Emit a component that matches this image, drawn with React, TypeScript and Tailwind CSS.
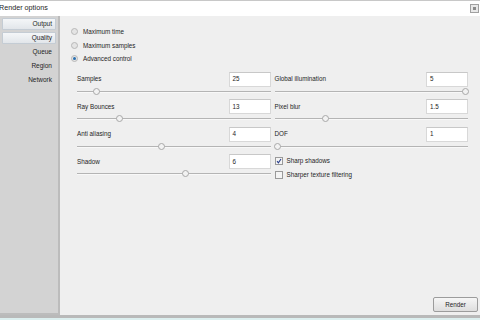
const font = { fontFamily: '"Liberation Sans", Arial, sans-serif' };

type Field = { label: string; value: string; pos: number };

const leftFields: Field[] = [
  { label: "Samples", value: "25", pos: 0.1 },
  { label: "Ray Bounces", value: "13", pos: 0.215 },
  { label: "Anti aliasing", value: "4", pos: 0.435 },
  { label: "Shadow", value: "6", pos: 0.56 },
];

const rightFields: Field[] = [
  { label: "Global illumination", value: "5", pos: 0.985 },
  { label: "Pixel blur", value: "1.5", pos: 0.26 },
  { label: "DOF", value: "1", pos: 0.015 },
];

const Slider = ({ pos }: { pos: number }) => (
  <div className="relative h-[8px] mt-[1px]">
    <div className="absolute left-0 right-0 top-[3px] h-[1px] bg-[#b4b4b4]" />
    <div className="absolute left-0 right-0 top-[4px] h-[1px] bg-[#f8f8f8]" />
    <div
      className="absolute top-0 w-[7px] h-[7px] -ml-[3px] rounded-full border border-[#a8a8a8] bg-[#f2f2f2]"
      style={{ left: `${pos * 100}%` }}
    />
  </div>
);

const FieldRow = ({ f }: { f: Field }) => (
  <div className="flex flex-col h-[27.5px]">
    <div className="flex items-center justify-between h-[15px]">
      <span className="text-[6.3px] text-[#1e1e1e]">{f.label}</span>
      <div className="w-[42px] h-[15px] bg-white border border-[#d8d8d8] border-t-[#c8c8c8] flex items-center px-[3px] text-[6.3px] text-[#1e1e1e]">
        {f.value}
      </div>
    </div>
    <Slider pos={f.pos} />
  </div>
);

const Radio = ({ label, checked }: { label: string; checked?: boolean }) => (
  <div className="flex items-center gap-[5px] h-[13.5px]">
    <div className="w-[7px] h-[7px] rounded-full border border-[#b8b8b8] bg-[#e4e4e4] flex items-center justify-center">
      {checked && <div className="w-[3px] h-[3px] rounded-full bg-[#2a6fb0]" />}
    </div>
    <span className="text-[6.3px] text-[#1e1e1e]">{label}</span>
  </div>
);

const Check = ({ label, checked }: { label: string; checked?: boolean }) => (
  <div className="flex items-center gap-[4px] h-[14px]">
    <div className="w-[8px] h-[8px] border border-[#9a9a9a] bg-[#f4f4f4] flex items-center justify-center">
      {checked && (
        <svg width="6" height="6" viewBox="0 0 6 6">
          <path d="M1 3.2 L2.4 4.8 L5 1" stroke="#2a3f8c" strokeWidth="1.1" fill="none" />
        </svg>
      )}
    </div>
    <span className="text-[6.3px] text-[#1e1e1e]">{label}</span>
  </div>
);

const NavItem = ({ label, active }: { label: string; active?: boolean }) => (
  <div
    className={
      "h-[12px] mx-[2px] pr-[3px] flex items-center justify-end text-[6.5px] text-[#1e1e1e] rounded-[1px] " +
      (active ? "bg-gradient-to-b from-[#f4f6f8] to-[#e2e6ea] border border-[#c4ccd4]" : "border border-transparent")
    }
  >
    {label}
  </div>
);

export default function App() {
  return (
    <div className="w-[480px] h-[320px] flex flex-col bg-[#efefef] overflow-hidden" style={font}>
      <div className="h-[16px] bg-white border-t border-[#c8c8c8] flex items-center justify-between">
        <span className="text-[7.2px] text-[#1e1e1e] -ml-[1px]">Render options</span>
        <div className="w-[9px] h-[9px] border border-[#a0a0a0] bg-[#e8e8e8] flex items-center justify-center mr-[1px]">
          <div className="w-[3px] h-[3px] bg-[#8a8a8a]" />
        </div>
      </div>
      <div className="flex flex-1">
        <div className="w-[60px] bg-[#d3d3d3] border-r-2 border-[#bcbcbc] border-b-2 flex flex-col gap-[2px] pt-[2px]">
          <NavItem label="Output" active />
          <NavItem label="Quality" active />
          <NavItem label="Queue" />
          <NavItem label="Region" />
          <NavItem label="Network" />
        </div>
        <div className="flex-1 flex flex-col pl-[11px] pr-[12px] pt-[9px] pb-[3px]">
          <div className="flex flex-col">
            <Radio label="Maximum time" />
            <Radio label="Maximum samples" />
            <Radio label="Advanced control" checked />
          </div>
          <div className="grid grid-cols-2 gap-x-[4px] pl-[6px] mt-[6px]">
            <div className="flex flex-col">
              {leftFields.map((f) => (
                <FieldRow key={f.label} f={f} />
              ))}
            </div>
            <div className="flex flex-col">
              {rightFields.map((f) => (
                <FieldRow key={f.label} f={f} />
              ))}
              <div className="flex flex-col">
                <Check label="Sharp shadows" checked />
                <Check label="Sharper texture filtering" />
              </div>
            </div>
          </div>
          <div className="flex-1" />
          <div className="flex justify-end -mr-[10px]">
            <button className="w-[45px] h-[15px] rounded-[2px] border border-[#9c9c9c] bg-gradient-to-b from-[#f6f6f6] to-[#dedede] text-[6.3px] text-[#1e1e1e]">
              Render
            </button>
          </div>
        </div>
      </div>
      <div className="h-[3px] bg-[#b9b9b9]" />
      <div className="h-[2px] bg-[#dcefef]" />
    </div>
  );
}
